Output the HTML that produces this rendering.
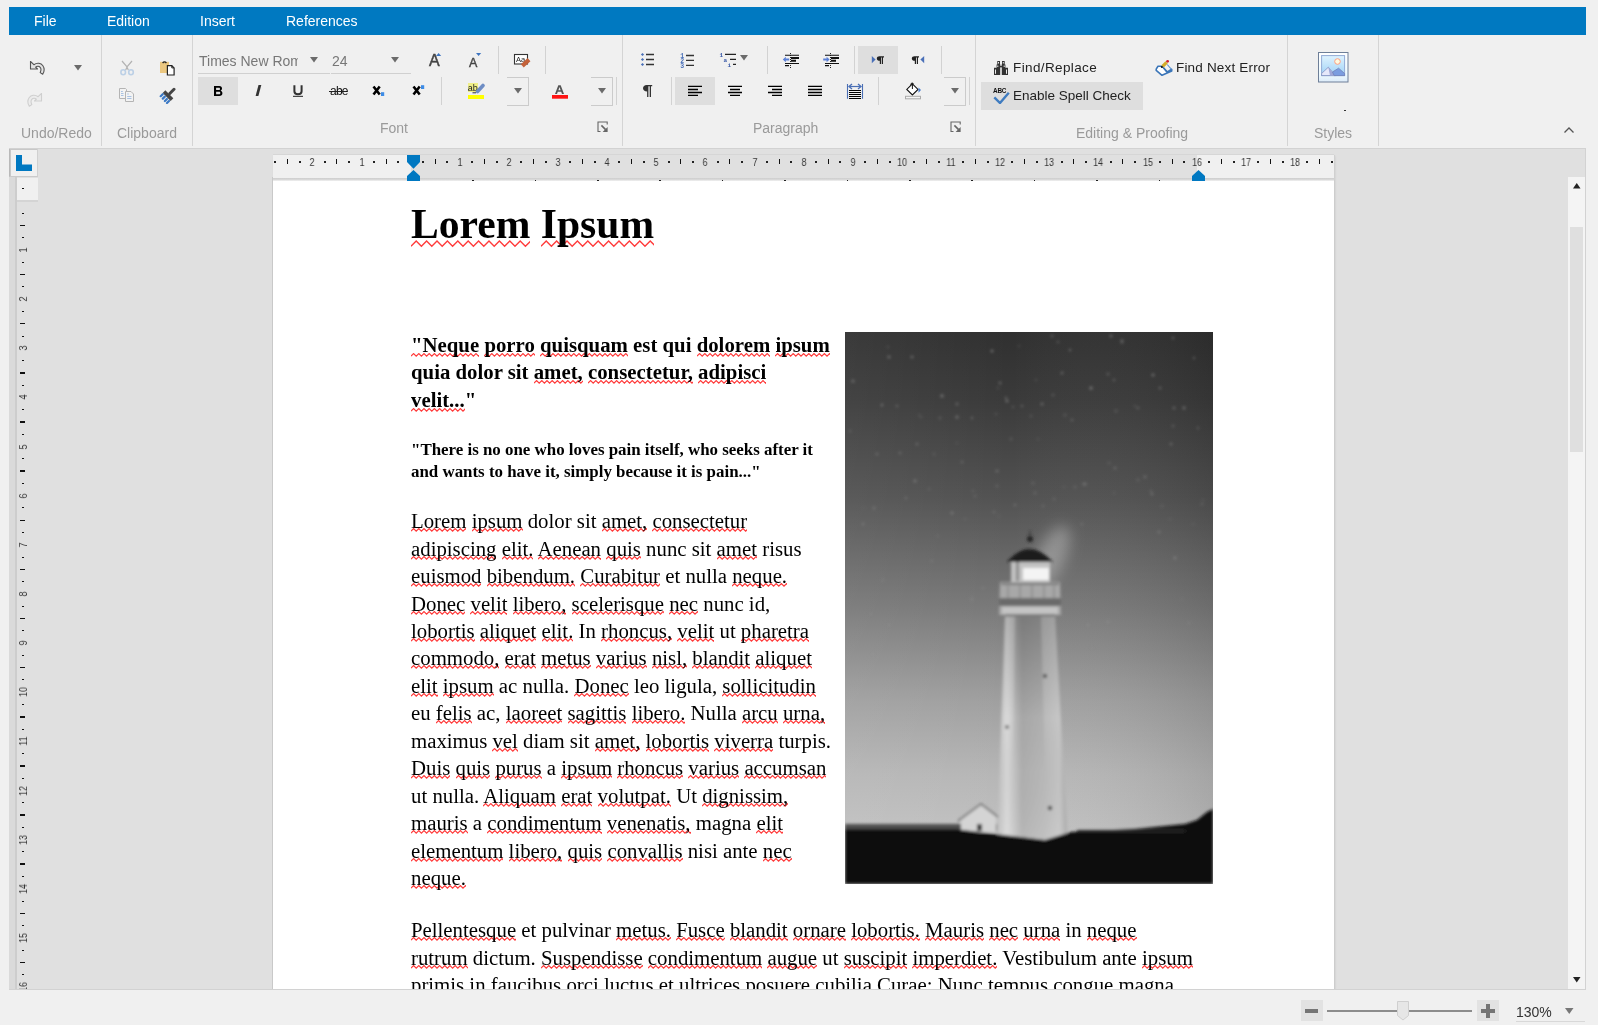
<!DOCTYPE html>
<html><head><meta charset="utf-8">
<style>
html,body{margin:0;padding:0;width:1598px;height:1025px;overflow:hidden;background:#f0f0f0;position:relative;font-family:"Liberation Sans",sans-serif;}
.a{position:absolute;}
.tab,.glabel,.tx{will-change:transform;}
.tabbar{left:9px;top:7px;width:1577px;height:28px;background:#0079c1;}
.tab{position:absolute;top:13px;color:#fff;font-size:14px;line-height:16px;white-space:pre;}
.gsep{position:absolute;top:35px;width:1px;height:111px;background:#d4d4d4;}
.glabel{position:absolute;color:#9a9a9a;font-size:14px;line-height:16px;white-space:pre;}
.docarea{left:9px;top:148px;width:1577px;height:841px;background:#e0e0e0;overflow:hidden;}
.page{left:273px;top:156px;width:1061px;height:900px;background:#fff;box-shadow:1px 0 2px rgba(0,0,0,.12);}
.ln{position:absolute;z-index:1;will-change:transform;white-space:pre;font-family:"Liberation Serif",serif;color:#000;}
.t{font-size:20.8px;line-height:23.03px;}
.tb{font-size:20.8px;line-height:23.03px;font-weight:bold;}
.h{font-size:41.6px;line-height:46.05px;font-weight:bold;}
.q{font-size:16.9px;line-height:18.71px;font-weight:bold;}
.w{position:relative;}
.zz{position:absolute;z-index:-1;left:0;top:19px;width:100%;height:5px;overflow:hidden;}
.tb .zz{top:20px;}
.h .zz{top:38px;height:9px;}
</style></head><body>
<svg width="0" height="0" style="position:absolute">
<defs>
<path id="zs" fill="none" stroke="#ff3b3b" stroke-width="1.2" d="M0 3.2l2.6-2.6 2.6 2.6l2.6-2.6 2.6 2.6l2.6-2.6 2.6 2.6l2.6-2.6 2.6 2.6l2.6-2.6 2.6 2.6l2.6-2.6 2.6 2.6l2.6-2.6 2.6 2.6l2.6-2.6 2.6 2.6l2.6-2.6 2.6 2.6l2.6-2.6 2.6 2.6l2.6-2.6 2.6 2.6l2.6-2.6 2.6 2.6l2.6-2.6 2.6 2.6l2.6-2.6 2.6 2.6l2.6-2.6 2.6 2.6l2.6-2.6 2.6 2.6l2.6-2.6 2.6 2.6l2.6-2.6 2.6 2.6l2.6-2.6 2.6 2.6l2.6-2.6 2.6 2.6l2.6-2.6 2.6 2.6l2.6-2.6 2.6 2.6l2.6-2.6 2.6 2.6l2.6-2.6 2.6 2.6l2.6-2.6 2.6 2.6l2.6-2.6 2.6 2.6l2.6-2.6 2.6 2.6l2.6-2.6 2.6 2.6l2.6-2.6 2.6 2.6l2.6-2.6 2.6 2.6l2.6-2.6 2.6 2.6l2.6-2.6 2.6 2.6l2.6-2.6 2.6 2.6l2.6-2.6 2.6 2.6l2.6-2.6 2.6 2.6l2.6-2.6 2.6 2.6l2.6-2.6 2.6 2.6l2.6-2.6 2.6 2.6l2.6-2.6 2.6 2.6l2.6-2.6 2.6 2.6l2.6-2.6 2.6 2.6l2.6-2.6 2.6 2.6"/>
<path id="zl" fill="none" stroke="#ff3b3b" stroke-width="1.4" d="M0 7.17l5.2-5.1 5.2 5.1l5.2-5.1 5.2 5.1l5.2-5.1 5.2 5.1l5.2-5.1 5.2 5.1l5.2-5.1 5.2 5.1l5.2-5.1 5.2 5.1l5.2-5.1 5.2 5.1l5.2-5.1 5.2 5.1l5.2-5.1 5.2 5.1l5.2-5.1 5.2 5.1l5.2-5.1 5.2 5.1l5.2-5.1 5.2 5.1l5.2-5.1 5.2 5.1l5.2-5.1 5.2 5.1l5.2-5.1 5.2 5.1l5.2-5.1 5.2 5.1l5.2-5.1 5.2 5.1l5.2-5.1 5.2 5.1l5.2-5.1 5.2 5.1l5.2-5.1 5.2 5.1l5.2-5.1 5.2 5.1l5.2-5.1 5.2 5.1l5.2-5.1 5.2 5.1l5.2-5.1 5.2 5.1l5.2-5.1 5.2 5.1l5.2-5.1 5.2 5.1"/>
</defs></svg>
<div class="a tabbar"></div>
<div class="tab" style="left:34px;">File</div>
<div class="tab" style="left:107px;">Edition</div>
<div class="tab" style="left:200px;">Insert</div>
<div class="tab" style="left:286px;">References</div>

<!-- group separators -->
<div class="gsep" style="left:101px"></div>
<div class="gsep" style="left:192px"></div>
<div class="gsep" style="left:622px"></div>
<div class="gsep" style="left:975px"></div>
<div class="gsep" style="left:1287px"></div>
<div class="gsep" style="left:1378px"></div>

<!-- Undo/Redo -->
<svg class="a" style="left:29px;top:60px" width="17" height="16"><path d="M1.5 1.5V9H8.5L6.6 7.1C8 5.9 10 5.9 11.2 7.3C12.3 8.6 12 10.8 11.2 12.6L13.7 14.2C15.3 11.6 15.6 8.3 13.9 5.7C12 3 8 2.3 4.9 4.7Z" fill="#e4e4e4" stroke="#555" stroke-width="1.1" stroke-linejoin="round"/></svg>
<svg class="a" style="left:74px;top:65px" width="8" height="6"><path d="M0 0H8L4 5.6Z" fill="#6b6b6b"/></svg>
<svg class="a" style="left:26px;top:92px" width="17" height="16"><path d="M15.5 1.5V9H8.5L10.4 7.1C9 5.9 7 5.9 5.8 7.3C4.7 8.6 5 10.8 5.8 12.6L3.3 14.2C1.7 11.6 1.4 8.3 3.1 5.7C5 3 9 2.3 12.1 4.7Z" fill="#ececec" stroke="#cfcfcf" stroke-width="1.1" stroke-linejoin="round"/></svg>
<!-- Clipboard -->
<svg class="a" style="left:119px;top:60px" width="16" height="16"><path d="M3 1L8.2 7L6.6 10M13 1L7.8 7L9.4 10" fill="none" stroke="#b2b2b2" stroke-width="1.2"/><ellipse cx="4.2" cy="12.2" rx="2.3" ry="2.5" fill="none" stroke="#bcd0e6" stroke-width="1.6"/><ellipse cx="12" cy="12.2" rx="2.3" ry="2.5" fill="none" stroke="#bcd0e6" stroke-width="1.6"/></svg>
<svg class="a" style="left:159px;top:60px" width="16" height="16"><rect x="1" y="1.8" width="9" height="11.2" fill="#ebc77f"/><path d="M3.6 3Q5.5 0.6 7.4 3" fill="none" stroke="#222" stroke-width="1.3"/><path d="M8.4 5.6H12.8L15.1 7.9V15H8.4Z" fill="#fff" stroke="#222" stroke-width="1.2"/><path d="M12.8 5.6V7.9H15.1" fill="none" stroke="#222" stroke-width="1"/></svg>
<svg class="a" style="left:118px;top:87px" width="17" height="16"><path d="M1.5 1.5H7.5L8.5 2.5V11.5H1.5Z" fill="#f3f3f3" stroke="#b4b4b4"/><path d="M7.5 4.5H13L15.5 7V14.5H7.5Z" fill="#f3f3f3" stroke="#b4b4b4"/><path d="M3 4.5H4.8M3 6.5H5.5M3 8.5H5.5M9.2 7H10.8M9.2 9.5H13.5M9.2 11.5H13.5" stroke="#a8c2e2" stroke-width="1"/></svg>
<svg class="a" style="left:159px;top:87px" width="17" height="17"><path d="M15 2.3L10.8 6.5" stroke="#444" stroke-width="3" stroke-linecap="round"/><path d="M5 4.6L13 12.6" stroke="#444" stroke-width="3.8"/><path d="M1.7 9.2L3.7 7.2M3.8 11.6L5.8 9.6M5.9 14L7.9 12M8 16L10 14" stroke="#3a78c4" stroke-width="2.2" stroke-linecap="round"/></svg>
<!-- Font combo -->
<div class="a tx" style="left:199px;top:53px;width:99px;height:17px;overflow:hidden;font-size:14px;line-height:17px;color:#777;white-space:pre">Times New Roman</div>
<svg class="a" style="left:310px;top:57px" width="8" height="6"><path d="M0 0H8L4 5.6Z" fill="#6b6b6b"/></svg>
<div class="a" style="left:198px;top:73px;width:132px;height:1px;background:#d0d0d0"></div>
<div class="a tx" style="left:332px;top:53px;font-size:14px;line-height:17px;color:#777;white-space:pre">24</div>
<svg class="a" style="left:391px;top:57px" width="8" height="6"><path d="M0 0H8L4 5.6Z" fill="#6b6b6b"/></svg>
<div class="a" style="left:331px;top:73px;width:80px;height:1px;background:#d0d0d0"></div>
<!-- grow/shrink -->
<div class="a tx" style="left:428.5px;top:51.5px;font-size:16px;line-height:17px;color:#444;white-space:pre;-webkit-text-stroke:0.45px #444">A</div>
<svg class="a" style="left:436px;top:53px" width="6" height="3"><path d="M0 3H5.2L2.6 0Z" fill="#3d74c0"/></svg>
<div class="a tx" style="left:468.8px;top:55.5px;font-size:12.5px;line-height:14px;color:#444;white-space:pre;-webkit-text-stroke:0.4px #444">A</div>
<svg class="a" style="left:476px;top:53px" width="6" height="3"><path d="M0 0H5.2L2.6 3Z" fill="#3d74c0"/></svg>
<div class="a" style="left:498px;top:46px;width:1px;height:28px;background:#d2d2d2"></div>
<svg class="a tx" style="left:513px;top:53px" width="18" height="15"><rect x="1.5" y="1.5" width="13" height="9.5" fill="#fff" stroke="#333" stroke-width="1.1"/><text x="3" y="9" font-family="Liberation Sans" font-size="7.5" fill="#222">Aa</text><path d="M16 6.6L9.3 12.9" stroke="#c4623a" stroke-width="4.2"/></svg>
<div class="a" style="left:545px;top:46px;width:1px;height:28px;background:#d2d2d2"></div>
<!-- B I U abe x x -->
<div class="a" style="left:198px;top:77px;width:40px;height:28px;background:#dedede"></div>
<svg class="a" style="left:213px;top:85px" width="11" height="12"><path fill-rule="evenodd" d="M1 1H6.3C8.2 1 9 2.1 9 3.5C9 4.6 8.4 5.3 7.6 5.7C8.7 6 9.4 6.9 9.4 8.2C9.4 9.9 8.3 11 6.3 11H1ZM3.1 2.8V5H6C6.6 5 7 4.6 7 3.9C7 3.2 6.6 2.8 6 2.8ZM3.1 6.7V9.2H6.2C6.9 9.2 7.3 8.7 7.3 7.95C7.3 7.2 6.9 6.7 6.2 6.7Z" fill="#000"/></svg>
<svg class="a" style="left:254px;top:84px" width="9" height="13"><path d="M4.5 1H7.3L4.4 12H1.6Z" fill="#333"/></svg>
<svg class="a" style="left:292px;top:84px" width="12" height="14"><path d="M2.4 1.2V7.2C2.4 9.2 3.7 10.3 6 10.3C8.3 10.3 9.6 9.2 9.6 7.2V1.2" fill="none" stroke="#333" stroke-width="2"/><rect x="1" y="11.8" width="10" height="1.1" fill="#333"/></svg>
<div class="a tx" style="left:329.5px;top:83.5px;font-size:12px;line-height:15px;color:#111;white-space:pre;letter-spacing:-0.75px">abe</div>
<div class="a" style="left:329px;top:91px;width:17px;height:1px;background:#222"></div>
<svg class="a" style="left:372px;top:85px" width="13" height="12"><path d="M1.5 1.5L7.7 9.5M7.7 1.5L1.5 9.5" stroke="#000" stroke-width="2.6"/><rect x="9" y="7.2" width="3.2" height="3.8" fill="#3d8ce6"/></svg>
<svg class="a" style="left:412px;top:84px" width="13" height="12"><path d="M1.5 2.5L7.7 10.5M7.7 2.5L1.5 10.5" stroke="#000" stroke-width="2.6"/><rect x="9" y="1.2" width="3.2" height="3.8" fill="#3d8ce6"/></svg>
<div class="a" style="left:441px;top:77px;width:1px;height:28px;background:#d2d2d2"></div>
<!-- highlight -->
<svg class="a tx" style="left:467px;top:82px" width="18" height="18"><rect x="1" y="1" width="10" height="9" fill="#eeee88"/><text x="0.8" y="8.6" font-family="Liberation Sans" font-size="9" fill="#222">ab</text><path d="M16 3.5L10.5 9.5" stroke="#6e8dc4" stroke-width="3.6" stroke-linecap="round"/><path d="M5.5 10.8H9" stroke="#333" stroke-width="1"/><rect x="1" y="13" width="16" height="4" fill="#ffff00"/></svg>
<div class="a" style="left:507px;top:77px;width:21px;height:27px;border:1px solid #cbcbcb;border-left:none"></div>
<svg class="a" style="left:514px;top:88px" width="8" height="6"><path d="M0 0H8L4 5.6Z" fill="#6b6b6b"/></svg>
<svg class="a" style="left:551px;top:84px" width="18" height="16"><path d="M4 10L7.3 1.3H9.7L13 10H11L10.2 7.8H6.8L6 10ZM7.4 6.2H9.6L8.5 3Z" fill="#555"/><rect x="1" y="11" width="16" height="3.7" fill="#ff1414"/></svg>
<div class="a" style="left:591px;top:77px;width:21px;height:27px;border:1px solid #cbcbcb;border-left:none"></div>
<svg class="a" style="left:598px;top:88px" width="8" height="6"><path d="M0 0H8L4 5.6Z" fill="#6b6b6b"/></svg>
<div class="a" style="left:616px;top:77px;width:1px;height:28px;background:#d2d2d2"></div>
<svg class="a" style="left:597px;top:121px" width="12" height="12"><path d="M3.5 10.5H1V1H10.2V3.6" fill="none" stroke="#666" stroke-width="1.1"/><path d="M4.4 4.4L8.6 8.6" stroke="#666" stroke-width="1.6"/><path d="M10.6 6V11H5.6Z" fill="#666"/></svg>
<!-- Paragraph -->
<svg class="a" style="left:640px;top:52px" width="16" height="15"><path d="M2.5 0.9L4.1 2.5L2.5 4.1L0.9 2.5ZM2.5 5.9L4.1 7.5L2.5 9.1L0.9 7.5ZM2.5 10.9L4.1 12.5L2.5 14.1L0.9 12.5Z" fill="#4a70b8"/><path d="M6 2.5H14M6 7.5H14M6 12.5H14" stroke="#333" stroke-width="1.4"/></svg>
<svg class="a tx" style="left:680px;top:52px" width="16" height="18"><text x="0.3" y="6.3" font-family="Liberation Mono" font-weight="bold" font-size="6.5" fill="#4a70b8">1</text><text x="0.3" y="11.3" font-family="Liberation Mono" font-weight="bold" font-size="6.5" fill="#4a70b8">2</text><text x="0.3" y="16.3" font-family="Liberation Mono" font-weight="bold" font-size="6.5" fill="#4a70b8">3</text><path d="M6 3.5H14M6 8.4H14M6 13.4H14" stroke="#333" stroke-width="1.4"/></svg>
<svg class="a tx" style="left:719px;top:51px" width="18" height="18"><text x="0.5" y="5.5" font-family="Liberation Mono" font-weight="bold" font-size="6" fill="#3a5aa8">1</text><text x="4.5" y="10.5" font-family="Liberation Mono" font-weight="bold" font-size="6" fill="#3a5aa8">a</text><text x="8.5" y="15.8" font-family="Liberation Mono" font-weight="bold" font-size="6" fill="#3a5aa8">i</text><path d="M6 3.4H17M11 8.4H17M14 13.4H17" stroke="#222" stroke-width="1.4"/></svg>
<svg class="a" style="left:740px;top:55px" width="8" height="6"><path d="M0 0H8L4 5.6Z" fill="#6b6b6b"/></svg>
<div class="a" style="left:767px;top:46px;width:1px;height:28px;background:#d2d2d2"></div>
<svg class="a" style="left:782px;top:52px" width="18" height="17"><path d="M8.5 1V16" stroke="#222" stroke-width="1" stroke-dasharray="1 1"/><path d="M3 3.2H17M3 11.5H17M3 13.6H7" stroke="#111" stroke-width="1.1"/><path d="M9 6H17M9 8.8H14" stroke="#111" stroke-width="1.9"/><path d="M0.8 7.5L3.8 4.8V6.6H7.2V8.4H3.8V10.2Z" fill="#5a7fd6"/></svg>
<svg class="a" style="left:822px;top:52px" width="18" height="17"><path d="M8.5 1V16" stroke="#222" stroke-width="1" stroke-dasharray="1 1"/><path d="M3 3.2H17M3 11.5H17M3 13.6H7" stroke="#111" stroke-width="1.1"/><path d="M9 6H17M9 8.8H14" stroke="#111" stroke-width="1.9"/><path d="M7.6 7.5L4.6 4.8V6.6H1.2V8.4H4.6V10.2Z" fill="#5a7fd6"/></svg>
<div class="a" style="left:854px;top:46px;width:1px;height:28px;background:#d2d2d2"></div>
<div class="a" style="left:858px;top:46px;width:40px;height:28px;background:#dedede"></div>
<svg class="a" style="left:871px;top:55px" width="14" height="10"><path d="M0.8 1V8.2L4.6 4.6Z" fill="#4a70b8"/><path d="M7.5 1.2H13V2.4H12V9H10.8V2.4H10V9H8.8V5.8C7 5.8 5.8 5 5.8 3.5C5.8 2 7 1.2 8.5 1.2Z" fill="#222"/></svg>
<svg class="a" style="left:911px;top:55px" width="14" height="10"><path d="M13.2 1V8.2L9.4 4.6Z" fill="#4a70b8"/><path d="M2.5 1.2H8V2.4H7V9H5.8V2.4H5V9H3.8V5.8C2 5.8 0.8 5 0.8 3.5C0.8 2 2 1.2 3.5 1.2Z" fill="#222"/></svg>
<div class="a" style="left:941px;top:46px;width:1px;height:28px;background:#d2d2d2"></div>
<svg class="a" style="left:642px;top:84px" width="11" height="14"><path d="M4.5 1H10.2V2.3H9V13H7.7V2.3H6.4V13H5.1V7.6C2.6 7.6 1 6.2 1 4.3C1 2.3 2.6 1 4.5 1Z" fill="#333"/></svg>
<div class="a" style="left:671px;top:77px;width:1px;height:28px;background:#d2d2d2"></div>
<div class="a" style="left:675px;top:77px;width:40px;height:28px;background:#dedede"></div>
<svg class="a" style="left:688px;top:85px" width="14" height="12"><path d="M0 1.4H14M0 4.5H10M0 7.5H14M0 10.4H10" stroke="#000" stroke-width="1.3"/></svg>
<svg class="a" style="left:728px;top:85px" width="14" height="12"><path d="M0 1.4H14M2 4.5H12M0 7.5H14M2 10.4H12" stroke="#000" stroke-width="1.3"/></svg>
<svg class="a" style="left:768px;top:85px" width="14" height="12"><path d="M0 1.4H14M4 4.5H14M0 7.5H14M4 10.4H14" stroke="#000" stroke-width="1.3"/></svg>
<svg class="a" style="left:808px;top:85px" width="14" height="12"><path d="M0 1.4H14M0 4.5H14M0 7.5H14M0 10.4H14" stroke="#000" stroke-width="1.3"/></svg>
<svg class="a" style="left:846px;top:83px" width="18" height="17"><path d="M1.5 1V15.7M16.5 1V15.7" stroke="#4a6fb5" stroke-width="1.1"/><path d="M3.5 3.5H14.5" stroke="#4a6fb5" stroke-width="1.2"/><path d="M6 1L3 3.5L6 6M12 1L15 3.5L12 6" fill="none" stroke="#4a6fb5" stroke-width="1.3"/><path d="M3 7.5H15M3 9.5H15M3 11.5H15M3 13.5H15M3 15.5H15" stroke="#000" stroke-width="1"/></svg>
<div class="a" style="left:878px;top:77px;width:1px;height:28px;background:#d2d2d2"></div>
<svg class="a" style="left:904px;top:82px" width="18" height="18"><path d="M8.4 1.8L14 7.4L8.4 13L2.8 7.4Z" fill="#fff" stroke="#111" stroke-width="1.1"/><path d="M8.4 7V1.6M6.6 2.6C6.6 1 9 0.6 9.6 1.8" fill="none" stroke="#111" stroke-width="1"/><path d="M14.5 5.5L17 8L14.5 10.8Z" fill="#4a7fd0"/><rect x="1.5" y="14.3" width="15" height="2.5" fill="#f4f4f4" stroke="#aaa" stroke-width="1"/></svg>
<div class="a" style="left:944px;top:77px;width:21px;height:27px;border:1px solid #cbcbcb;border-left:none"></div>
<svg class="a" style="left:951px;top:88px" width="8" height="6"><path d="M0 0H8L4 5.6Z" fill="#6b6b6b"/></svg>
<div class="a" style="left:969px;top:77px;width:1px;height:28px;background:#d2d2d2"></div>
<svg class="a" style="left:950px;top:121px" width="12" height="12"><path d="M3.5 10.5H1V1H10.2V3.6" fill="none" stroke="#666" stroke-width="1.1"/><path d="M4.4 4.4L8.6 8.6" stroke="#666" stroke-width="1.6"/><path d="M10.6 6V11H5.6Z" fill="#666"/></svg>
<!-- Editing & Proofing -->
<svg class="a" style="left:994px;top:61px" width="14" height="14"><path d="M3.3 0H6V3.4H3.3ZM8 0H10.7V3.4H8ZM2.6 3.4H6.4V6.8H2.6ZM7.6 3.4H11.4V6.8H7.6ZM6 5H8V6.3H6ZM0 6.8H6.2V14H0ZM7.8 6.8H14V14H7.8Z" fill="#333"/><path d="M1.5 8.5V12.8M12.5 8.5V12.8M3.8 4.5V6M10.2 4.5V6M4.5 1V2.5M9.3 1V2.5" stroke="#fff" stroke-width="0.9"/></svg>
<div class="a tx" style="left:1013px;top:60px;font-size:13.5px;line-height:16px;color:#222;white-space:pre;letter-spacing:0.38px">Find/Replace</div>
<div class="a" style="left:981px;top:82px;width:162px;height:28px;background:#dedede"></div>
<svg class="a tx" style="left:992px;top:87px" width="18" height="17"><text x="1" y="5.6" font-family="Liberation Sans" font-weight="bold" font-size="6.4" fill="#111" letter-spacing="-0.2">ABC</text><path d="M2.3 10.3L8 16L16.8 5.8" fill="none" stroke="#3f7cc0" stroke-width="2.4"/></svg>
<div class="a tx" style="left:1013px;top:88px;font-size:13.5px;line-height:16px;color:#222;white-space:pre">Enable Spell Check</div>
<svg class="a" style="left:1150px;top:55px" width="25" height="23"><path d="M6.2 14.1L8 11.3H12.2L17.3 17L21.7 14.3V16L12 20.3L6.2 15.4Z" fill="#fff" stroke="#3a75b8" stroke-width="1.6" stroke-linejoin="round"/><path d="M12.2 11.3L17 17.3" stroke="#3a75b8" stroke-width="1.2"/><path d="M17.2 9.5L21.5 14.3" stroke="#5a8fd0" stroke-width="1.1"/><path d="M12.6 11.4L16.6 7.4" stroke="#d4ac2a" stroke-width="3.3"/><circle cx="17.6" cy="6.3" r="1.4" fill="#d0202c"/><circle cx="11.8" cy="12" r="1" fill="#111"/></svg>
<div class="a tx" style="left:1176px;top:60px;font-size:13.5px;line-height:16px;color:#222;white-space:pre;letter-spacing:0.18px">Find Next Error</div>
<!-- Styles -->
<svg class="a" style="left:1318px;top:52px" width="31" height="31"><defs><linearGradient id="sk" x1="0" y1="0" x2="0" y2="1"><stop offset="0" stop-color="#dff3ff"/><stop offset="1" stop-color="#9fd2f6"/></linearGradient><linearGradient id="fr" x1="0" y1="0" x2="0" y2="1"><stop offset="0" stop-color="#fff"/><stop offset=".75" stop-color="#eefaff"/><stop offset="1" stop-color="#dceaf8"/></linearGradient></defs><rect x="0.5" y="0.5" width="29.5" height="29.5" fill="url(#fr)" stroke="#6e7f98" stroke-width="1"/><rect x="3.6" y="3.6" width="23" height="20" fill="url(#sk)" stroke="#92aad6" stroke-width="1"/><circle cx="19.5" cy="9.5" r="2.8" fill="#fffbe0" stroke="#ff9e80" stroke-width="1"/><path d="M3.6 21.5L10.3 15.2L17.5 23.6H3.6Z" fill="#e6e8fa" stroke="#8090c0" stroke-width="0.8"/><path d="M10.3 15.2L17.5 23.6H12Z" fill="#a0a8d8"/><path d="M14.5 20L20.6 16.2L26.6 21.5V23.6H16.2Z" fill="#7b9de0" stroke="#7080b8" stroke-width="0.8"/></svg>
<div class="a" style="left:1344px;top:110px;width:2px;height:1px;background:#333"></div>
<svg class="a" style="left:1563px;top:125px" width="12" height="9"><path d="M1.5 7.5L6 3L10.5 7.5" fill="none" stroke="#555" stroke-width="1.3"/></svg>

<div class="glabel" style="left:21px;top:125px">Undo/Redo</div>
<div class="glabel" style="left:117px;top:125px">Clipboard</div>
<div class="glabel" style="left:380px;top:120px">Font</div>
<div class="glabel" style="left:753px;top:120px">Paragraph</div>
<div class="glabel" style="left:1076px;top:125px">Editing &amp; Proofing</div>
<div class="glabel" style="left:1314px;top:125px">Styles</div>

<div class="a docarea">
<div class="a" style="left:-9px;top:-148px;width:1598px;height:1025px">
<div class="a page"></div>
<svg class="a" style="left:845px;top:332px" width="368" height="552" viewBox="0 0 368 552">
<defs>
<linearGradient id="sky" x1="0" y1="0" x2="0" y2="1">
<stop offset="0" stop-color="#303030"/><stop offset=".12" stop-color="#3a3a3a"/><stop offset=".3" stop-color="#525252"/><stop offset=".5" stop-color="#797979"/><stop offset=".67" stop-color="#a0a0a0"/><stop offset=".8" stop-color="#b6b6b6"/><stop offset=".9" stop-color="#c0c0c0"/><stop offset="1" stop-color="#c0c0c0"/>
</linearGradient>
<linearGradient id="skyx" x1="0" y1="0" x2="1" y2="0">
<stop offset="0" stop-color="#fff" stop-opacity=".05"/><stop offset=".45" stop-color="#fff" stop-opacity="0"/><stop offset="1" stop-color="#000" stop-opacity=".1"/>
</linearGradient>
<linearGradient id="tower" x1="0" y1="0" x2="1" y2="0">
<stop offset="0" stop-color="#bcbcbc"/><stop offset=".14" stop-color="#dadada"/><stop offset=".35" stop-color="#b0b0b0"/><stop offset=".65" stop-color="#bababa"/><stop offset=".88" stop-color="#c6c6c6"/><stop offset="1" stop-color="#a4a4a4"/>
</linearGradient>
<linearGradient id="tv" x1="0" y1="0" x2="0" y2="1">
<stop offset="0" stop-color="#000" stop-opacity=".18"/><stop offset=".45" stop-color="#000" stop-opacity="0"/><stop offset="1" stop-color="#fff" stop-opacity=".1"/>
</linearGradient>
<linearGradient id="tc" x1="0" y1="0" x2="0" y2="1"><stop offset="0" stop-color="#000" stop-opacity=".16"/><stop offset="1" stop-color="#000" stop-opacity="0"/></linearGradient>
<filter id="bl" x="-5%" y="-5%" width="110%" height="110%"><feGaussianBlur stdDeviation="1.7"/></filter>
<filter id="bl2" x="-80%" y="-80%" width="260%" height="260%"><feGaussianBlur stdDeviation="7"/></filter>
</defs>
<rect width="368" height="552" fill="url(#sky)"/>
<rect width="368" height="552" fill="url(#skyx)"/>
<ellipse cx="206" cy="225" rx="14" ry="34" fill="#fff" fill-opacity=".28" transform="rotate(25 206 225)" filter="url(#bl2)"/>
<g filter="url(#bl)">
<circle cx="89" cy="122" r="1.2" fill="#c8c8c8" fill-opacity="0.19"/><circle cx="8" cy="49" r="1.5" fill="#c8c8c8" fill-opacity="0.37"/><circle cx="306" cy="159" r="0.9" fill="#c8c8c8" fill-opacity="0.29"/><circle cx="317" cy="174" r="1.3" fill="#c8c8c8" fill-opacity="0.16"/><circle cx="277" cy="9" r="1.4" fill="#c8c8c8" fill-opacity="0.41"/><circle cx="263" cy="290" r="1.4" fill="#c8c8c8" fill-opacity="0.12"/><circle cx="293" cy="148" r="1.4" fill="#c8c8c8" fill-opacity="0.18"/><circle cx="52" cy="74" r="1.1" fill="#c8c8c8" fill-opacity="0.39"/><circle cx="112" cy="72" r="1.2" fill="#c8c8c8" fill-opacity="0.38"/><circle cx="330" cy="226" r="1.4" fill="#c8c8c8" fill-opacity="0.28"/><circle cx="246" cy="56" r="1.5" fill="#c8c8c8" fill-opacity="0.49"/><circle cx="209" cy="167" r="1.2" fill="#c8c8c8" fill-opacity="0.21"/><circle cx="26" cy="282" r="0.9" fill="#c8c8c8" fill-opacity="0.17"/><circle cx="152" cy="154" r="1.4" fill="#c8c8c8" fill-opacity="0.17"/><circle cx="225" cy="18" r="1.0" fill="#c8c8c8" fill-opacity="0.53"/><circle cx="358" cy="168" r="1.0" fill="#c8c8c8" fill-opacity="0.17"/><circle cx="220" cy="83" r="1.2" fill="#c8c8c8" fill-opacity="0.24"/><circle cx="18" cy="192" r="1.4" fill="#c8c8c8" fill-opacity="0.21"/><circle cx="170" cy="173" r="1.2" fill="#c8c8c8" fill-opacity="0.26"/><circle cx="227" cy="88" r="1.3" fill="#c8c8c8" fill-opacity="0.26"/><circle cx="112" cy="111" r="0.8" fill="#c8c8c8" fill-opacity="0.29"/><circle cx="213" cy="10" r="1.2" fill="#c8c8c8" fill-opacity="0.26"/><circle cx="230" cy="155" r="1.0" fill="#c8c8c8" fill-opacity="0.31"/><circle cx="270" cy="136" r="1.5" fill="#c8c8c8" fill-opacity="0.23"/><circle cx="168" cy="75" r="1.0" fill="#c8c8c8" fill-opacity="0.31"/><circle cx="219" cy="155" r="0.8" fill="#c8c8c8" fill-opacity="0.28"/><circle cx="269" cy="161" r="1.0" fill="#c8c8c8" fill-opacity="0.19"/><circle cx="161" cy="66" r="1.0" fill="#c8c8c8" fill-opacity="0.46"/><circle cx="162" cy="69" r="1.3" fill="#c8c8c8" fill-opacity="0.47"/><circle cx="166" cy="107" r="0.9" fill="#c8c8c8" fill-opacity="0.40"/><circle cx="307" cy="162" r="1.2" fill="#c8c8c8" fill-opacity="0.33"/><circle cx="128" cy="159" r="1.0" fill="#c8c8c8" fill-opacity="0.23"/><circle cx="154" cy="184" r="0.9" fill="#c8c8c8" fill-opacity="0.14"/><circle cx="344" cy="291" r="1.1" fill="#c8c8c8" fill-opacity="0.18"/><circle cx="339" cy="76" r="1.4" fill="#c8c8c8" fill-opacity="0.40"/><circle cx="191" cy="48" r="0.8" fill="#c8c8c8" fill-opacity="0.40"/><circle cx="107" cy="181" r="1.3" fill="#c8c8c8" fill-opacity="0.33"/><circle cx="328" cy="6" r="1.3" fill="#c8c8c8" fill-opacity="0.31"/><circle cx="112" cy="85" r="1.5" fill="#c8c8c8" fill-opacity="0.37"/><circle cx="127" cy="86" r="1.1" fill="#c8c8c8" fill-opacity="0.42"/><circle cx="130" cy="164" r="0.9" fill="#c8c8c8" fill-opacity="0.32"/><circle cx="337" cy="267" r="0.8" fill="#c8c8c8" fill-opacity="0.17"/><circle cx="315" cy="56" r="1.2" fill="#c8c8c8" fill-opacity="0.35"/><circle cx="174" cy="14" r="0.9" fill="#c8c8c8" fill-opacity="0.28"/><circle cx="28" cy="322" r="0.9" fill="#c8c8c8" fill-opacity="0.10"/><circle cx="117" cy="130" r="1.2" fill="#c8c8c8" fill-opacity="0.26"/><circle cx="72" cy="112" r="1.3" fill="#c8c8c8" fill-opacity="0.28"/><circle cx="32" cy="122" r="1.3" fill="#c8c8c8" fill-opacity="0.27"/><circle cx="293" cy="76" r="1.1" fill="#c8c8c8" fill-opacity="0.41"/><circle cx="155" cy="51" r="1.2" fill="#c8c8c8" fill-opacity="0.43"/><circle cx="29" cy="176" r="1.5" fill="#c8c8c8" fill-opacity="0.22"/><circle cx="328" cy="94" r="0.9" fill="#c8c8c8" fill-opacity="0.41"/><circle cx="243" cy="293" r="1.3" fill="#c8c8c8" fill-opacity="0.15"/><circle cx="207" cy="4" r="0.9" fill="#c8c8c8" fill-opacity="0.52"/><circle cx="19" cy="176" r="0.9" fill="#c8c8c8" fill-opacity="0.15"/><circle cx="308" cy="43" r="1.3" fill="#c8c8c8" fill-opacity="0.49"/><circle cx="348" cy="192" r="0.8" fill="#c8c8c8" fill-opacity="0.28"/><circle cx="188" cy="151" r="1.5" fill="#c8c8c8" fill-opacity="0.17"/><circle cx="120" cy="187" r="1.0" fill="#c8c8c8" fill-opacity="0.17"/><circle cx="93" cy="204" r="1.1" fill="#c8c8c8" fill-opacity="0.19"/><circle cx="147" cy="19" r="1.2" fill="#c8c8c8" fill-opacity="0.56"/><circle cx="152" cy="139" r="1.3" fill="#c8c8c8" fill-opacity="0.32"/><circle cx="190" cy="161" r="1.4" fill="#c8c8c8" fill-opacity="0.19"/><circle cx="38" cy="248" r="1.2" fill="#c8c8c8" fill-opacity="0.17"/><circle cx="263" cy="42" r="1.2" fill="#c8c8c8" fill-opacity="0.32"/><circle cx="87" cy="229" r="1.0" fill="#c8c8c8" fill-opacity="0.23"/><circle cx="153" cy="56" r="1.0" fill="#c8c8c8" fill-opacity="0.22"/><circle cx="177" cy="74" r="1.0" fill="#c8c8c8" fill-opacity="0.43"/><circle cx="55" cy="121" r="1.1" fill="#c8c8c8" fill-opacity="0.39"/><circle cx="300" cy="145" r="1.4" fill="#c8c8c8" fill-opacity="0.26"/><circle cx="269" cy="48" r="1.0" fill="#c8c8c8" fill-opacity="0.44"/><circle cx="247" cy="316" r="1.0" fill="#c8c8c8" fill-opacity="0.08"/><circle cx="97" cy="64" r="1.4" fill="#c8c8c8" fill-opacity="0.48"/><circle cx="95" cy="86" r="1.3" fill="#c8c8c8" fill-opacity="0.22"/><circle cx="37" cy="73" r="1.2" fill="#c8c8c8" fill-opacity="0.40"/><circle cx="5" cy="99" r="0.9" fill="#c8c8c8" fill-opacity="0.35"/><circle cx="349" cy="26" r="1.0" fill="#c8c8c8" fill-opacity="0.45"/><circle cx="44" cy="293" r="0.9" fill="#c8c8c8" fill-opacity="0.18"/><circle cx="138" cy="256" r="1.0" fill="#c8c8c8" fill-opacity="0.19"/><circle cx="240" cy="152" r="1.5" fill="#c8c8c8" fill-opacity="0.31"/><circle cx="197" cy="72" r="1.3" fill="#c8c8c8" fill-opacity="0.40"/><circle cx="208" cy="63" r="1.2" fill="#c8c8c8" fill-opacity="0.27"/><circle cx="325" cy="187" r="0.9" fill="#c8c8c8" fill-opacity="0.20"/><circle cx="264" cy="131" r="1.1" fill="#c8c8c8" fill-opacity="0.25"/><circle cx="67" cy="25" r="1.3" fill="#c8c8c8" fill-opacity="0.41"/><circle cx="271" cy="79" r="1.4" fill="#c8c8c8" fill-opacity="0.22"/><circle cx="186" cy="84" r="1.0" fill="#c8c8c8" fill-opacity="0.29"/><circle cx="149" cy="180" r="1.0" fill="#c8c8c8" fill-opacity="0.31"/><circle cx="44" cy="25" r="1.3" fill="#c8c8c8" fill-opacity="0.47"/><circle cx="70" cy="149" r="1.4" fill="#c8c8c8" fill-opacity="0.33"/><circle cx="217" cy="41" r="1.2" fill="#c8c8c8" fill-opacity="0.40"/><circle cx="76" cy="85" r="0.8" fill="#c8c8c8" fill-opacity="0.42"/><circle cx="326" cy="112" r="1.2" fill="#c8c8c8" fill-opacity="0.35"/><circle cx="357" cy="172" r="1.1" fill="#c8c8c8" fill-opacity="0.27"/><circle cx="266" cy="4" r="1.3" fill="#c8c8c8" fill-opacity="0.42"/><circle cx="193" cy="107" r="0.8" fill="#c8c8c8" fill-opacity="0.32"/><circle cx="237" cy="192" r="1.4" fill="#c8c8c8" fill-opacity="0.16"/><circle cx="290" cy="74" r="1.0" fill="#c8c8c8" fill-opacity="0.23"/><circle cx="198" cy="174" r="1.3" fill="#c8c8c8" fill-opacity="0.17"/><circle cx="314" cy="200" r="1.3" fill="#c8c8c8" fill-opacity="0.27"/><circle cx="127" cy="267" r="1.4" fill="#c8c8c8" fill-opacity="0.15"/><circle cx="277" cy="11" r="0.9" fill="#c8c8c8" fill-opacity="0.31"/><circle cx="61" cy="166" r="1.2" fill="#c8c8c8" fill-opacity="0.24"/><circle cx="238" cy="152" r="1.1" fill="#c8c8c8" fill-opacity="0.20"/><circle cx="329" cy="76" r="1.2" fill="#c8c8c8" fill-opacity="0.38"/><circle cx="84" cy="157" r="0.9" fill="#c8c8c8" fill-opacity="0.26"/><circle cx="74" cy="83" r="0.9" fill="#c8c8c8" fill-opacity="0.21"/><circle cx="43" cy="15" r="0.8" fill="#c8c8c8" fill-opacity="0.39"/><circle cx="151" cy="82" r="1.1" fill="#c8c8c8" fill-opacity="0.21"/><circle cx="353" cy="96" r="0.9" fill="#c8c8c8" fill-opacity="0.36"/>
<path d="M160 283 L210 283 L223 511 L152 511 Z" fill="url(#tower)"/>
<path d="M160 283 L210 283 L223 511 L152 511 Z" fill="url(#tv)"/>
<path d="M170 284 L196 284 L200 440 L168 440 Z" fill="url(#tc)"/>
<path d="M155 250 L215 250 L216 283 L154 283 Z" fill="#a8a8a8"/>
<path d="M156 252H214" stroke="#666" stroke-width="1.4"/>
<path d="M163 252V266M175 252V266M187 252V266M199 252V266M209 252V266" stroke="#8a8a8a" stroke-width="1.4"/>
<rect x="154" y="266" width="62" height="8" fill="#6a6a6a"/>
<rect x="157" y="275" width="56" height="7" fill="#c4c4c4"/>
<rect x="160" y="282" width="50" height="2.5" fill="#7a7a7a"/>
<rect x="166" y="227" width="39" height="23" fill="#c2c2c2"/>
<rect x="171" y="228" width="3" height="21" fill="#8a8a8a"/>
<rect x="178" y="236" width="26" height="12" fill="#f4f4f4"/>
<path d="M162 230 Q184 204 208 230 Z" fill="#1c1c1c"/>
<circle cx="185" cy="207" r="3" fill="#222"/>
<rect x="184.3" y="199" width="1.4" height="8" fill="#333"/>
<circle cx="200" cy="344" r="2" fill="#444"/>
<circle cx="162" cy="395" r="1.8" fill="#555"/>
<circle cx="205" cy="476" r="2.2" fill="#444"/>
<path d="M0 492H152V499H0Z" fill="#505050"/>
<path d="M116 487 L136 473 L151 484 V500 H116 Z" fill="#d4d4d4"/>
<path d="M113 489 L136 472 L153 485" fill="none" stroke="#6e6e6e" stroke-width="1.6"/>
<rect x="132" y="492" width="5" height="7" fill="#333"/>
<path d="M0 497 L110 497 L150 502 L200 508 L226 500 L290 497 L320 494 L340 492 L352 488 L362 480 L368 477 L368 552 L0 552 Z" fill="#0f0f0f"/>
<path d="M232 499H340" stroke="#2a2a2a" stroke-width="2"/>
</g>
</svg>
<div class="ln h" style="left:411px;top:200.93px"><span class="w">Lorem<svg class="zz"><use href="#zl"/></svg></span> <span class="w">Ipsum<svg class="zz"><use href="#zl"/></svg></span></div>
<div class="ln tb" style="left:411px;top:333.17px"><span class="w">"Neque<svg class="zz"><use href="#zs"/></svg></span> <span class="w">porro<svg class="zz"><use href="#zs"/></svg></span> <span class="w">quisquam<svg class="zz"><use href="#zs"/></svg></span> est qui <span class="w">dolorem<svg class="zz"><use href="#zs"/></svg></span> <span class="w">ipsum<svg class="zz"><use href="#zs"/></svg></span></div>
<div class="ln tb" style="left:411px;top:360.37px">quia dolor sit <span class="w">amet,<svg class="zz"><use href="#zs"/></svg></span> <span class="w">consectetur,<svg class="zz"><use href="#zs"/></svg></span> <span class="w">adipisci<svg class="zz"><use href="#zs"/></svg></span></div>
<div class="ln tb" style="left:411px;top:387.57px"><span class="w">velit...<svg class="zz"><use href="#zs"/></svg></span>"</div>
<div class="ln q" style="left:411px;top:440.84px">"There is no one who loves pain itself, who seeks after it</div>
<div class="ln q" style="left:411px;top:462.54px">and wants to have it, simply because it is pain..."</div>
<div class="ln t" style="left:411px;top:509.17px"><span class="w">Lorem<svg class="zz"><use href="#zs"/></svg></span> <span class="w">ipsum<svg class="zz"><use href="#zs"/></svg></span> dolor sit <span class="w">amet,<svg class="zz"><use href="#zs"/></svg></span> <span class="w">consectetur<svg class="zz"><use href="#zs"/></svg></span></div>
<div class="ln t" style="left:411px;top:536.63px"><span class="w">adipiscing<svg class="zz"><use href="#zs"/></svg></span> <span class="w">elit.<svg class="zz"><use href="#zs"/></svg></span> <span class="w">Aenean<svg class="zz"><use href="#zs"/></svg></span> <span class="w">quis<svg class="zz"><use href="#zs"/></svg></span> nunc sit <span class="w">amet<svg class="zz"><use href="#zs"/></svg></span> risus</div>
<div class="ln t" style="left:411px;top:564.09px"><span class="w">euismod<svg class="zz"><use href="#zs"/></svg></span> <span class="w">bibendum.<svg class="zz"><use href="#zs"/></svg></span> <span class="w">Curabitur<svg class="zz"><use href="#zs"/></svg></span> et nulla <span class="w">neque.<svg class="zz"><use href="#zs"/></svg></span></div>
<div class="ln t" style="left:411px;top:591.55px"><span class="w">Donec<svg class="zz"><use href="#zs"/></svg></span> <span class="w">velit<svg class="zz"><use href="#zs"/></svg></span> <span class="w">libero,<svg class="zz"><use href="#zs"/></svg></span> <span class="w">scelerisque<svg class="zz"><use href="#zs"/></svg></span> <span class="w">nec<svg class="zz"><use href="#zs"/></svg></span> nunc id,</div>
<div class="ln t" style="left:411px;top:619.01px"><span class="w">lobortis<svg class="zz"><use href="#zs"/></svg></span> <span class="w">aliquet<svg class="zz"><use href="#zs"/></svg></span> <span class="w">elit.<svg class="zz"><use href="#zs"/></svg></span> In <span class="w">rhoncus,<svg class="zz"><use href="#zs"/></svg></span> <span class="w">velit<svg class="zz"><use href="#zs"/></svg></span> ut <span class="w">pharetra<svg class="zz"><use href="#zs"/></svg></span></div>
<div class="ln t" style="left:411px;top:646.47px"><span class="w">commodo,<svg class="zz"><use href="#zs"/></svg></span> <span class="w">erat<svg class="zz"><use href="#zs"/></svg></span> <span class="w">metus<svg class="zz"><use href="#zs"/></svg></span> <span class="w">varius<svg class="zz"><use href="#zs"/></svg></span> <span class="w">nisl,<svg class="zz"><use href="#zs"/></svg></span> <span class="w">blandit<svg class="zz"><use href="#zs"/></svg></span> <span class="w">aliquet<svg class="zz"><use href="#zs"/></svg></span></div>
<div class="ln t" style="left:411px;top:673.93px"><span class="w">elit<svg class="zz"><use href="#zs"/></svg></span> <span class="w">ipsum<svg class="zz"><use href="#zs"/></svg></span> ac nulla. <span class="w">Donec<svg class="zz"><use href="#zs"/></svg></span> leo ligula, <span class="w">sollicitudin<svg class="zz"><use href="#zs"/></svg></span></div>
<div class="ln t" style="left:411px;top:701.39px">eu <span class="w">felis<svg class="zz"><use href="#zs"/></svg></span> ac, <span class="w">laoreet<svg class="zz"><use href="#zs"/></svg></span> <span class="w">sagittis<svg class="zz"><use href="#zs"/></svg></span> <span class="w">libero.<svg class="zz"><use href="#zs"/></svg></span> Nulla <span class="w">arcu<svg class="zz"><use href="#zs"/></svg></span> <span class="w">urna,<svg class="zz"><use href="#zs"/></svg></span></div>
<div class="ln t" style="left:411px;top:728.85px">maximus <span class="w">vel<svg class="zz"><use href="#zs"/></svg></span> diam sit <span class="w">amet,<svg class="zz"><use href="#zs"/></svg></span> <span class="w">lobortis<svg class="zz"><use href="#zs"/></svg></span> <span class="w">viverra<svg class="zz"><use href="#zs"/></svg></span> turpis.</div>
<div class="ln t" style="left:411px;top:756.31px"><span class="w">Duis<svg class="zz"><use href="#zs"/></svg></span> <span class="w">quis<svg class="zz"><use href="#zs"/></svg></span> <span class="w">purus<svg class="zz"><use href="#zs"/></svg></span> a <span class="w">ipsum<svg class="zz"><use href="#zs"/></svg></span> <span class="w">rhoncus<svg class="zz"><use href="#zs"/></svg></span> <span class="w">varius<svg class="zz"><use href="#zs"/></svg></span> <span class="w">accumsan<svg class="zz"><use href="#zs"/></svg></span></div>
<div class="ln t" style="left:411px;top:783.77px">ut nulla. <span class="w">Aliquam<svg class="zz"><use href="#zs"/></svg></span> <span class="w">erat<svg class="zz"><use href="#zs"/></svg></span> <span class="w">volutpat.<svg class="zz"><use href="#zs"/></svg></span> Ut <span class="w">dignissim,<svg class="zz"><use href="#zs"/></svg></span></div>
<div class="ln t" style="left:411px;top:811.23px"><span class="w">mauris<svg class="zz"><use href="#zs"/></svg></span> a <span class="w">condimentum<svg class="zz"><use href="#zs"/></svg></span> <span class="w">venenatis,<svg class="zz"><use href="#zs"/></svg></span> magna <span class="w">elit<svg class="zz"><use href="#zs"/></svg></span></div>
<div class="ln t" style="left:411px;top:838.69px"><span class="w">elementum<svg class="zz"><use href="#zs"/></svg></span> <span class="w">libero,<svg class="zz"><use href="#zs"/></svg></span> <span class="w">quis<svg class="zz"><use href="#zs"/></svg></span> <span class="w">convallis<svg class="zz"><use href="#zs"/></svg></span> nisi ante <span class="w">nec<svg class="zz"><use href="#zs"/></svg></span></div>
<div class="ln t" style="left:411px;top:866.15px"><span class="w">neque.<svg class="zz"><use href="#zs"/></svg></span></div>
<div class="ln t" style="left:411px;top:918.07px"><span class="w">Pellentesque<svg class="zz"><use href="#zs"/></svg></span> et pulvinar <span class="w">metus.<svg class="zz"><use href="#zs"/></svg></span> <span class="w">Fusce<svg class="zz"><use href="#zs"/></svg></span> <span class="w">blandit<svg class="zz"><use href="#zs"/></svg></span> <span class="w">ornare<svg class="zz"><use href="#zs"/></svg></span> <span class="w">lobortis.<svg class="zz"><use href="#zs"/></svg></span> <span class="w">Mauris<svg class="zz"><use href="#zs"/></svg></span> <span class="w">nec<svg class="zz"><use href="#zs"/></svg></span> <span class="w">urna<svg class="zz"><use href="#zs"/></svg></span> in <span class="w">neque<svg class="zz"><use href="#zs"/></svg></span></div>
<div class="ln t" style="left:411px;top:945.53px"><span class="w">rutrum<svg class="zz"><use href="#zs"/></svg></span> dictum. <span class="w">Suspendisse<svg class="zz"><use href="#zs"/></svg></span> <span class="w">condimentum<svg class="zz"><use href="#zs"/></svg></span> <span class="w">augue<svg class="zz"><use href="#zs"/></svg></span> ut <span class="w">suscipit<svg class="zz"><use href="#zs"/></svg></span> <span class="w">imperdiet.<svg class="zz"><use href="#zs"/></svg></span> Vestibulum ante <span class="w">ipsum<svg class="zz"><use href="#zs"/></svg></span></div>
<div class="ln t" style="left:411px;top:972.99px">primis in faucibus orci luctus et ultrices posuere cubilia Curae; Nunc tempus congue magna</div>
</div>
</div>
<div class="a" style="left:273px;top:155px;width:1061px;height:23px;background:#e0e0e0"></div>
<div class="a" style="left:273px;top:155px;width:138px;height:23px;background:#f0f0f0"></div>
<div class="a" style="left:1197px;top:155px;width:137px;height:23px;background:#f0f0f0"></div>
<div class="a" style="left:273px;top:154px;width:1061px;height:1px;background:#d6d6d6"></div>
<div class="a" style="left:273px;top:178px;width:1061px;height:3px;background:linear-gradient(#cdcdcd,#dadada 60%,#f4f4f4)"></div>
<div class="a" style="left:272px;top:177px;width:1px;height:812px;background:#c9c9c9"></div>
<div class="a" style="left:1334px;top:155px;width:1px;height:25px;background:#d0d0d0"></div>
<div class="a" style="left:274px;top:161px;width:2px;height:2px;background:#222"></div>
<div class="a" style="left:287px;top:159px;width:1px;height:5px;background:#111"></div>
<div class="a" style="left:299px;top:161px;width:2px;height:2px;background:#222"></div>
<div class="a tx" style="left:302.3px;top:156px;width:20px;text-align:center;font-size:10px;line-height:14px;color:#333;transform:scaleX(.88)">2</div>
<div class="a" style="left:324px;top:161px;width:2px;height:2px;background:#222"></div>
<div class="a" style="left:336px;top:159px;width:1px;height:5px;background:#111"></div>
<div class="a" style="left:348px;top:161px;width:2px;height:2px;background:#222"></div>
<div class="a tx" style="left:351.5px;top:156px;width:20px;text-align:center;font-size:10px;line-height:14px;color:#333;transform:scaleX(.88)">1</div>
<div class="a" style="left:373px;top:161px;width:2px;height:2px;background:#222"></div>
<div class="a" style="left:386px;top:159px;width:1px;height:5px;background:#111"></div>
<div class="a" style="left:397px;top:161px;width:2px;height:2px;background:#222"></div>
<div class="a" style="left:422px;top:161px;width:2px;height:2px;background:#222"></div>
<div class="a" style="left:435px;top:159px;width:1px;height:5px;background:#111"></div>
<div class="a" style="left:446px;top:161px;width:2px;height:2px;background:#222"></div>
<div class="a tx" style="left:449.7px;top:156px;width:20px;text-align:center;font-size:10px;line-height:14px;color:#333;transform:scaleX(.88)">1</div>
<div class="a" style="left:471px;top:161px;width:2px;height:2px;background:#222"></div>
<div class="a" style="left:484px;top:159px;width:1px;height:5px;background:#111"></div>
<div class="a" style="left:496px;top:161px;width:2px;height:2px;background:#222"></div>
<div class="a tx" style="left:498.9px;top:156px;width:20px;text-align:center;font-size:10px;line-height:14px;color:#333;transform:scaleX(.88)">2</div>
<div class="a" style="left:520px;top:161px;width:2px;height:2px;background:#222"></div>
<div class="a" style="left:533px;top:159px;width:1px;height:5px;background:#111"></div>
<div class="a" style="left:545px;top:161px;width:2px;height:2px;background:#222"></div>
<div class="a tx" style="left:548.0px;top:156px;width:20px;text-align:center;font-size:10px;line-height:14px;color:#333;transform:scaleX(.88)">3</div>
<div class="a" style="left:569px;top:161px;width:2px;height:2px;background:#222"></div>
<div class="a" style="left:582px;top:159px;width:1px;height:5px;background:#111"></div>
<div class="a" style="left:594px;top:161px;width:2px;height:2px;background:#222"></div>
<div class="a tx" style="left:597.1px;top:156px;width:20px;text-align:center;font-size:10px;line-height:14px;color:#333;transform:scaleX(.88)">4</div>
<div class="a" style="left:618px;top:161px;width:2px;height:2px;background:#222"></div>
<div class="a" style="left:631px;top:159px;width:1px;height:5px;background:#111"></div>
<div class="a" style="left:643px;top:161px;width:2px;height:2px;background:#222"></div>
<div class="a tx" style="left:646.2px;top:156px;width:20px;text-align:center;font-size:10px;line-height:14px;color:#333;transform:scaleX(.88)">5</div>
<div class="a" style="left:668px;top:161px;width:2px;height:2px;background:#222"></div>
<div class="a" style="left:680px;top:159px;width:1px;height:5px;background:#111"></div>
<div class="a" style="left:692px;top:161px;width:2px;height:2px;background:#222"></div>
<div class="a tx" style="left:695.4px;top:156px;width:20px;text-align:center;font-size:10px;line-height:14px;color:#333;transform:scaleX(.88)">6</div>
<div class="a" style="left:717px;top:161px;width:2px;height:2px;background:#222"></div>
<div class="a" style="left:729px;top:159px;width:1px;height:5px;background:#111"></div>
<div class="a" style="left:741px;top:161px;width:2px;height:2px;background:#222"></div>
<div class="a tx" style="left:744.5px;top:156px;width:20px;text-align:center;font-size:10px;line-height:14px;color:#333;transform:scaleX(.88)">7</div>
<div class="a" style="left:766px;top:161px;width:2px;height:2px;background:#222"></div>
<div class="a" style="left:779px;top:159px;width:1px;height:5px;background:#111"></div>
<div class="a" style="left:790px;top:161px;width:2px;height:2px;background:#222"></div>
<div class="a tx" style="left:793.6px;top:156px;width:20px;text-align:center;font-size:10px;line-height:14px;color:#333;transform:scaleX(.88)">8</div>
<div class="a" style="left:815px;top:161px;width:2px;height:2px;background:#222"></div>
<div class="a" style="left:828px;top:159px;width:1px;height:5px;background:#111"></div>
<div class="a" style="left:839px;top:161px;width:2px;height:2px;background:#222"></div>
<div class="a tx" style="left:842.8px;top:156px;width:20px;text-align:center;font-size:10px;line-height:14px;color:#333;transform:scaleX(.88)">9</div>
<div class="a" style="left:864px;top:161px;width:2px;height:2px;background:#222"></div>
<div class="a" style="left:877px;top:159px;width:1px;height:5px;background:#111"></div>
<div class="a" style="left:889px;top:161px;width:2px;height:2px;background:#222"></div>
<div class="a tx" style="left:891.9px;top:156px;width:20px;text-align:center;font-size:10px;line-height:14px;color:#333;transform:scaleX(.88)">10</div>
<div class="a" style="left:913px;top:161px;width:2px;height:2px;background:#222"></div>
<div class="a" style="left:926px;top:159px;width:1px;height:5px;background:#111"></div>
<div class="a" style="left:938px;top:161px;width:2px;height:2px;background:#222"></div>
<div class="a tx" style="left:941.0px;top:156px;width:20px;text-align:center;font-size:10px;line-height:14px;color:#333;transform:scaleX(.88)">11</div>
<div class="a" style="left:962px;top:161px;width:2px;height:2px;background:#222"></div>
<div class="a" style="left:975px;top:159px;width:1px;height:5px;background:#111"></div>
<div class="a" style="left:987px;top:161px;width:2px;height:2px;background:#222"></div>
<div class="a tx" style="left:990.2px;top:156px;width:20px;text-align:center;font-size:10px;line-height:14px;color:#333;transform:scaleX(.88)">12</div>
<div class="a" style="left:1011px;top:161px;width:2px;height:2px;background:#222"></div>
<div class="a" style="left:1024px;top:159px;width:1px;height:5px;background:#111"></div>
<div class="a" style="left:1036px;top:161px;width:2px;height:2px;background:#222"></div>
<div class="a tx" style="left:1039.3px;top:156px;width:20px;text-align:center;font-size:10px;line-height:14px;color:#333;transform:scaleX(.88)">13</div>
<div class="a" style="left:1061px;top:161px;width:2px;height:2px;background:#222"></div>
<div class="a" style="left:1073px;top:159px;width:1px;height:5px;background:#111"></div>
<div class="a" style="left:1085px;top:161px;width:2px;height:2px;background:#222"></div>
<div class="a tx" style="left:1088.4px;top:156px;width:20px;text-align:center;font-size:10px;line-height:14px;color:#333;transform:scaleX(.88)">14</div>
<div class="a" style="left:1110px;top:161px;width:2px;height:2px;background:#222"></div>
<div class="a" style="left:1122px;top:159px;width:1px;height:5px;background:#111"></div>
<div class="a" style="left:1134px;top:161px;width:2px;height:2px;background:#222"></div>
<div class="a tx" style="left:1137.6px;top:156px;width:20px;text-align:center;font-size:10px;line-height:14px;color:#333;transform:scaleX(.88)">15</div>
<div class="a" style="left:1159px;top:161px;width:2px;height:2px;background:#222"></div>
<div class="a" style="left:1172px;top:159px;width:1px;height:5px;background:#111"></div>
<div class="a" style="left:1183px;top:161px;width:2px;height:2px;background:#222"></div>
<div class="a tx" style="left:1186.7px;top:156px;width:20px;text-align:center;font-size:10px;line-height:14px;color:#333;transform:scaleX(.88)">16</div>
<div class="a" style="left:1208px;top:161px;width:2px;height:2px;background:#222"></div>
<div class="a" style="left:1221px;top:159px;width:1px;height:5px;background:#111"></div>
<div class="a" style="left:1233px;top:161px;width:2px;height:2px;background:#222"></div>
<div class="a tx" style="left:1235.8px;top:156px;width:20px;text-align:center;font-size:10px;line-height:14px;color:#333;transform:scaleX(.88)">17</div>
<div class="a" style="left:1257px;top:161px;width:2px;height:2px;background:#222"></div>
<div class="a" style="left:1270px;top:159px;width:1px;height:5px;background:#111"></div>
<div class="a" style="left:1282px;top:161px;width:2px;height:2px;background:#222"></div>
<div class="a tx" style="left:1284.9px;top:156px;width:20px;text-align:center;font-size:10px;line-height:14px;color:#333;transform:scaleX(.88)">18</div>
<div class="a" style="left:1306px;top:161px;width:2px;height:2px;background:#222"></div>
<div class="a" style="left:1319px;top:159px;width:1px;height:5px;background:#111"></div>
<div class="a" style="left:1331px;top:161px;width:2px;height:2px;background:#222"></div>
<div class="a" style="left:472.25px;top:179.5px;width:1.5px;height:1.5px;background:#222"></div>
<div class="a" style="left:534.65px;top:179.5px;width:1.5px;height:1.5px;background:#222"></div>
<div class="a" style="left:597.05px;top:179.5px;width:1.5px;height:1.5px;background:#222"></div>
<div class="a" style="left:659.45px;top:179.5px;width:1.5px;height:1.5px;background:#222"></div>
<div class="a" style="left:721.85px;top:179.5px;width:1.5px;height:1.5px;background:#222"></div>
<div class="a" style="left:784.25px;top:179.5px;width:1.5px;height:1.5px;background:#222"></div>
<div class="a" style="left:846.65px;top:179.5px;width:1.5px;height:1.5px;background:#222"></div>
<div class="a" style="left:909.05px;top:179.5px;width:1.5px;height:1.5px;background:#222"></div>
<div class="a" style="left:971.45px;top:179.5px;width:1.5px;height:1.5px;background:#222"></div>
<div class="a" style="left:1033.85px;top:179.5px;width:1.5px;height:1.5px;background:#222"></div>
<div class="a" style="left:1096.25px;top:179.5px;width:1.5px;height:1.5px;background:#222"></div>
<div class="a" style="left:1158.65px;top:179.5px;width:1.5px;height:1.5px;background:#222"></div>
<svg class="a" style="left:406px;top:155px" width="15" height="26"><path d="M1 0H14V7L7.5 13.8L1 7Z M1 26H14V21L7.5 15L1 21Z" fill="#0078c1"/></svg>
<svg class="a" style="left:1191px;top:169px" width="15" height="12"><path d="M1 12H14V7L7.5 1L1 7Z" fill="#0078c1"/></svg>
<div class="a" style="left:9px;top:177px;width:6px;height:812px;background:#dadada"></div>
<div class="a" style="left:15px;top:177px;width:2px;height:812px;background:#cdcdcd"></div>
<div class="a" style="left:17px;top:178px;width:21px;height:22px;background:#f0f0f0"></div>
<div class="a" style="left:17px;top:200px;width:21px;height:2px;background:#d4d4d4"></div>
<div class="a" style="left:0;top:0;width:40px;height:989px;overflow:hidden">
<div class="a" style="left:22px;top:188px;width:2px;height:1px;background:#111"></div>
<div class="a" style="left:22px;top:213px;width:2px;height:1px;background:#111"></div>
<div class="a" style="left:20px;top:224.72px;width:5px;height:1.5px;background:#111"></div>
<div class="a" style="left:22px;top:237px;width:2px;height:1px;background:#111"></div>
<div class="a tx" style="left:13.5px;top:243.0px;width:20px;height:14px;text-align:center;font-size:10px;line-height:14px;color:#333;transform:rotate(-90deg) scaleX(.88)">1</div>
<div class="a" style="left:22px;top:262px;width:2px;height:1px;background:#111"></div>
<div class="a" style="left:20px;top:273.85px;width:5px;height:1.5px;background:#111"></div>
<div class="a" style="left:22px;top:286px;width:2px;height:1px;background:#111"></div>
<div class="a tx" style="left:13.5px;top:292.2px;width:20px;height:14px;text-align:center;font-size:10px;line-height:14px;color:#333;transform:rotate(-90deg) scaleX(.88)">2</div>
<div class="a" style="left:22px;top:311px;width:2px;height:1px;background:#111"></div>
<div class="a" style="left:20px;top:322.98px;width:5px;height:1.5px;background:#111"></div>
<div class="a" style="left:22px;top:336px;width:2px;height:1px;background:#111"></div>
<div class="a tx" style="left:13.5px;top:341.3px;width:20px;height:14px;text-align:center;font-size:10px;line-height:14px;color:#333;transform:rotate(-90deg) scaleX(.88)">3</div>
<div class="a" style="left:22px;top:360px;width:2px;height:1px;background:#111"></div>
<div class="a" style="left:20px;top:372.11px;width:5px;height:1.5px;background:#111"></div>
<div class="a" style="left:22px;top:385px;width:2px;height:1px;background:#111"></div>
<div class="a tx" style="left:13.5px;top:390.4px;width:20px;height:14px;text-align:center;font-size:10px;line-height:14px;color:#333;transform:rotate(-90deg) scaleX(.88)">4</div>
<div class="a" style="left:22px;top:409px;width:2px;height:1px;background:#111"></div>
<div class="a" style="left:20px;top:421.24px;width:5px;height:1.5px;background:#111"></div>
<div class="a" style="left:22px;top:434px;width:2px;height:1px;background:#111"></div>
<div class="a tx" style="left:13.5px;top:439.6px;width:20px;height:14px;text-align:center;font-size:10px;line-height:14px;color:#333;transform:rotate(-90deg) scaleX(.88)">5</div>
<div class="a" style="left:22px;top:458px;width:2px;height:1px;background:#111"></div>
<div class="a" style="left:20px;top:470.37px;width:5px;height:1.5px;background:#111"></div>
<div class="a" style="left:22px;top:483px;width:2px;height:1px;background:#111"></div>
<div class="a tx" style="left:13.5px;top:488.7px;width:20px;height:14px;text-align:center;font-size:10px;line-height:14px;color:#333;transform:rotate(-90deg) scaleX(.88)">6</div>
<div class="a" style="left:22px;top:507px;width:2px;height:1px;background:#111"></div>
<div class="a" style="left:20px;top:519.50px;width:5px;height:1.5px;background:#111"></div>
<div class="a" style="left:22px;top:532px;width:2px;height:1px;background:#111"></div>
<div class="a tx" style="left:13.5px;top:537.8px;width:20px;height:14px;text-align:center;font-size:10px;line-height:14px;color:#333;transform:rotate(-90deg) scaleX(.88)">7</div>
<div class="a" style="left:22px;top:557px;width:2px;height:1px;background:#111"></div>
<div class="a" style="left:20px;top:568.62px;width:5px;height:1.5px;background:#111"></div>
<div class="a" style="left:22px;top:581px;width:2px;height:1px;background:#111"></div>
<div class="a tx" style="left:13.5px;top:586.9px;width:20px;height:14px;text-align:center;font-size:10px;line-height:14px;color:#333;transform:rotate(-90deg) scaleX(.88)">8</div>
<div class="a" style="left:22px;top:606px;width:2px;height:1px;background:#111"></div>
<div class="a" style="left:20px;top:617.75px;width:5px;height:1.5px;background:#111"></div>
<div class="a" style="left:22px;top:630px;width:2px;height:1px;background:#111"></div>
<div class="a tx" style="left:13.5px;top:636.1px;width:20px;height:14px;text-align:center;font-size:10px;line-height:14px;color:#333;transform:rotate(-90deg) scaleX(.88)">9</div>
<div class="a" style="left:22px;top:655px;width:2px;height:1px;background:#111"></div>
<div class="a" style="left:20px;top:666.88px;width:5px;height:1.5px;background:#111"></div>
<div class="a" style="left:22px;top:679px;width:2px;height:1px;background:#111"></div>
<div class="a tx" style="left:13.5px;top:685.2px;width:20px;height:14px;text-align:center;font-size:10px;line-height:14px;color:#333;transform:rotate(-90deg) scaleX(.88)">10</div>
<div class="a" style="left:22px;top:704px;width:2px;height:1px;background:#111"></div>
<div class="a" style="left:20px;top:716.01px;width:5px;height:1.5px;background:#111"></div>
<div class="a" style="left:22px;top:729px;width:2px;height:1px;background:#111"></div>
<div class="a tx" style="left:13.5px;top:734.3px;width:20px;height:14px;text-align:center;font-size:10px;line-height:14px;color:#333;transform:rotate(-90deg) scaleX(.88)">11</div>
<div class="a" style="left:22px;top:753px;width:2px;height:1px;background:#111"></div>
<div class="a" style="left:20px;top:765.14px;width:5px;height:1.5px;background:#111"></div>
<div class="a" style="left:22px;top:778px;width:2px;height:1px;background:#111"></div>
<div class="a tx" style="left:13.5px;top:783.5px;width:20px;height:14px;text-align:center;font-size:10px;line-height:14px;color:#333;transform:rotate(-90deg) scaleX(.88)">12</div>
<div class="a" style="left:22px;top:802px;width:2px;height:1px;background:#111"></div>
<div class="a" style="left:20px;top:814.27px;width:5px;height:1.5px;background:#111"></div>
<div class="a" style="left:22px;top:827px;width:2px;height:1px;background:#111"></div>
<div class="a tx" style="left:13.5px;top:832.6px;width:20px;height:14px;text-align:center;font-size:10px;line-height:14px;color:#333;transform:rotate(-90deg) scaleX(.88)">13</div>
<div class="a" style="left:22px;top:851px;width:2px;height:1px;background:#111"></div>
<div class="a" style="left:20px;top:863.40px;width:5px;height:1.5px;background:#111"></div>
<div class="a" style="left:22px;top:876px;width:2px;height:1px;background:#111"></div>
<div class="a tx" style="left:13.5px;top:881.7px;width:20px;height:14px;text-align:center;font-size:10px;line-height:14px;color:#333;transform:rotate(-90deg) scaleX(.88)">14</div>
<div class="a" style="left:22px;top:901px;width:2px;height:1px;background:#111"></div>
<div class="a" style="left:20px;top:912.53px;width:5px;height:1.5px;background:#111"></div>
<div class="a" style="left:22px;top:925px;width:2px;height:1px;background:#111"></div>
<div class="a tx" style="left:13.5px;top:930.9px;width:20px;height:14px;text-align:center;font-size:10px;line-height:14px;color:#333;transform:rotate(-90deg) scaleX(.88)">15</div>
<div class="a" style="left:22px;top:950px;width:2px;height:1px;background:#111"></div>
<div class="a" style="left:20px;top:961.66px;width:5px;height:1.5px;background:#111"></div>
<div class="a" style="left:22px;top:974px;width:2px;height:1px;background:#111"></div>
<div class="a tx" style="left:13.5px;top:980.0px;width:20px;height:14px;text-align:center;font-size:10px;line-height:14px;color:#333;transform:rotate(-90deg) scaleX(.88)">16</div>
</div>
<div class="a" style="left:9px;top:148px;width:29px;height:29px;background:#f0f0f0;box-sizing:border-box;border:1px solid #b9b9b9;border-right-color:#d0d0d0;border-bottom-color:#cacaca;box-shadow:inset 1px 1px 0 #c8c8c8"></div>
<svg class="a" style="left:16px;top:155px" width="16" height="16"><path d="M0 0H6V9.5H16V16H0Z" fill="#0078c1"/></svg>
<!-- scrollbar -->
<div class="a" style="left:1568px;top:177px;width:17px;height:812px;background:#f4f4f4"></div>
<div class="a" style="left:1570px;top:227px;width:13px;height:225px;background:#dfdfdf"></div>
<svg class="a" style="left:1573px;top:183px" width="8" height="6"><path d="M0 5.5L3.75 0L7.5 5.5Z" fill="#222"/></svg>
<svg class="a" style="left:1573px;top:977px" width="8" height="6"><path d="M0 0L3.75 5.5L7.5 0Z" fill="#222"/></svg>
<!-- status bar -->
<div class="a" style="left:1301px;top:1000px;width:22px;height:21px;background:#e2e2e2"></div>
<div class="a" style="left:1305px;top:1009px;width:13px;height:4px;background:#757575"></div>
<div class="a" style="left:1327px;top:1010px;width:145px;height:2px;background:#8c8c8c"></div>
<svg class="a" style="left:1396px;top:1000px" width="14" height="21"><path d="M1.5 1.5H12.5V15.5L7 20L1.5 15.5Z" fill="#e6e6e6" stroke="#cfcfcf" stroke-width="1"/></svg>
<div class="a" style="left:1477px;top:1000px;width:22px;height:21px;background:#e2e2e2"></div>
<div class="a" style="left:1481px;top:1009px;width:14px;height:4px;background:#757575"></div>
<div class="a" style="left:1486px;top:1004px;width:4px;height:14px;background:#757575"></div>
<div class="a tx" style="left:1516px;top:1004px;font-size:14px;line-height:16px;color:#333;white-space:pre">130%</div>
<svg class="a" style="left:1565px;top:1008px" width="9" height="7"><path d="M0 0H8.5L4.25 6Z" fill="#777"/></svg>
<div class="a" style="left:1516px;top:1021px;width:69px;height:1px;background:#d8d8d8"></div>
<!-- doc borders -->
<div class="a" style="left:9px;top:148px;width:1577px;height:1px;background:#d2d2d2"></div>
<div class="a" style="left:1585px;top:148px;width:1px;height:842px;background:#d2d2d2"></div>
<div class="a" style="left:9px;top:989px;width:1577px;height:1px;background:#d2d2d2"></div>
</body></html>
